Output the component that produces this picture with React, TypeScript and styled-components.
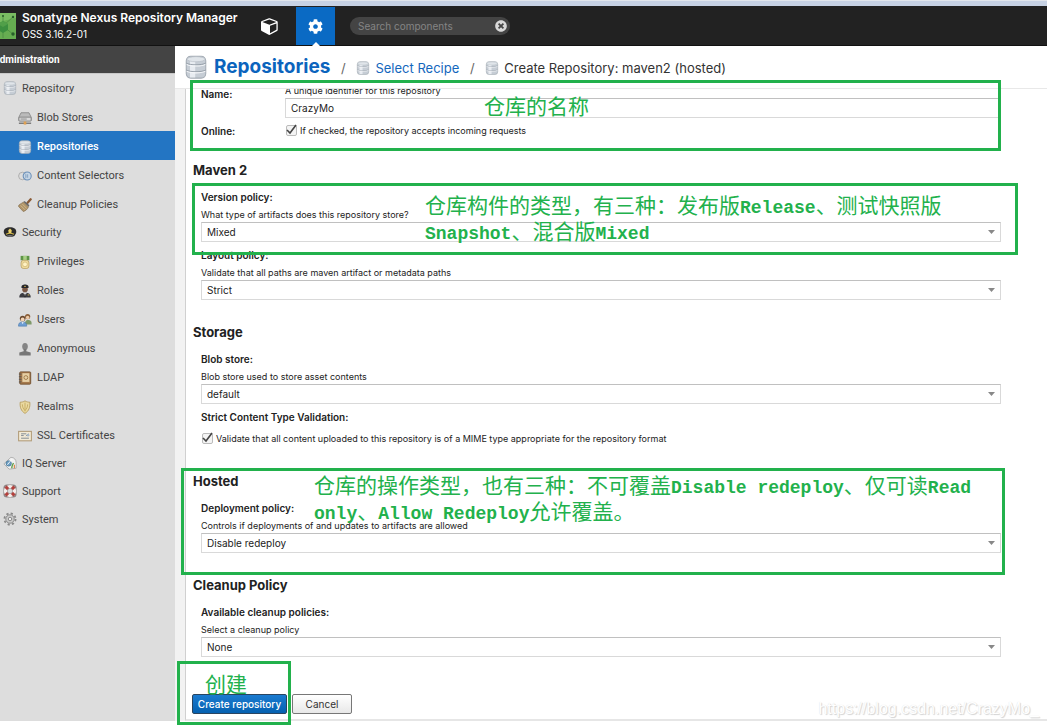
import React from "react";
import styled, { createGlobalStyle } from "styled-components";
import { FaCog, FaTimesCircle } from "react-icons/fa";

const GlobalStyle = createGlobalStyle`
  *, *::before, *::after { box-sizing: border-box; }
  body {
    margin: 0;
    background: #fff;
    color: #222;
    font-family: Inter, "Noto Sans CJK SC", sans-serif;
    font-size: 10px;
  }
  button, input, select { font: inherit; color: inherit; }
`;

const green = "#22b14c";

/* ---------- page frame ---------- */

const Page = styled.div`
  position: relative;
  display: flex;
  flex-direction: column;
  min-width: 900px;
  min-height: 100vh;
`;

const WindowEdge = styled.div`
  height: 6px;
  background: #c7d2e4;
  border-top: 1px solid #e2e6ec;
`;

const TopBar = styled.header`
  display: flex;
  align-items: stretch;
  height: 40px;
  background: #222;
  color: #fff;
  border-bottom: 1px solid #111;
`;

const Brand = styled.div`
  display: flex;
  align-items: center;
  gap: 6px;
  width: 251px;
  overflow: hidden;
  svg { flex: none; margin-left: -10px; }
`;

const BrandText = styled.div`
  display: flex;
  flex-direction: column;
  white-space: nowrap;
`;

const BrandName = styled.strong`
  font-size: 12px;
  line-height: 16px;
  font-weight: 600;
`;

const BrandVersion = styled.span`
  font-size: 10px;
  line-height: 16px;
`;

const ModeButton = styled.button<{ $active?: boolean }>`
  position: relative;
  display: flex;
  align-items: center;
  justify-content: center;
  width: ${(p) => (p.$active ? 39 : 38)}px;
  margin-right: ${(p) => (p.$active ? 0 : 7)}px;
  margin-top: 1px;
  height: 38px;
  padding: 0;
  border: 0;
  color: #fff;
  background: ${(p) => (p.$active ? "#0a6ac4" : "transparent")};
  &::after {
    content: "";
    display: ${(p) => (p.$active ? "block" : "none")};
    position: absolute;
    bottom: -1px;
    border: 4px solid transparent;
    border-top: 0;
    border-bottom-color: #fff;
  }
`;

const SearchBox = styled.label`
  align-self: center;
  display: flex;
  align-items: center;
  width: 160px;
  height: 18px;
  margin-left: 15px;
  padding: 0 3px 0 8px;
  border-radius: 9px;
  background: #444;
  color: #ddd;
  input {
    flex: 1;
    min-width: 0;
    padding: 0;
    border: 0;
    outline: 0;
    background: none;
    font-size: 10px;
  }
  input::placeholder { color: #858585; opacity: 1; }
`;

const ClearButton = styled.button`
  display: flex;
  padding: 0;
  border: 0;
  background: none;
  color: #d8d8d8;
`;

const Body = styled.div`
  display: flex;
  align-items: stretch;
`;

/* ---------- side menu ---------- */

const SideBar = styled.nav`
  flex: none;
  width: 175px;
  background: #ddd;
  overflow: hidden;
  font-family: Roboto, sans-serif;
`;

const SideTitle = styled.div`
  height: 28px;
  margin-left: -8px;
  padding-left: 1px;
  line-height: 28px;
  background: #444;
  border-bottom: 1px solid #c8c8c8;
  color: #fff;
  font-size: 10px;
  font-weight: 700;
`;

const SideItem = styled.a<{ $child?: boolean; $active?: boolean }>`
  display: flex;
  align-items: center;
  gap: 5px;
  height: ${(p) => (p.$child ? 29 : 28)}px;
  padding: ${(p) => (p.$child ? "2px 0 0 18px" : "0 0 0 3px")};
  text-decoration: none;
  font-size: 11px;
  font-weight: ${(p) => (p.$active ? 500 : 400)};
  color: ${(p) => (p.$active ? "#fff" : "#444")};
  background: ${(p) => (p.$active ? "#2375c3" : "transparent")};
`;

/* ---------- content ---------- */

const Main = styled.main`
  flex: 1;
  min-width: 0;
`;

const Crumbs = styled.div`
  display: flex;
  align-items: center;
  height: 42px;
  padding-left: 9px;
  white-space: nowrap;
  font-size: 13px;
  color: #333;
`;

const CrumbTitle = styled.h1`
  margin: 0 0 0 6px;
  font-size: 19px;
  line-height: 24px;
  font-weight: 700;
  color: #0b64bd;
`;

const Slash = styled.span`
  width: 26px;
  line-height: 18px;
  padding-top: 2px;
  text-align: center;
  color: #666;
`;

const CrumbPart = styled.span`
  display: flex;
  align-items: center;
  gap: 5px;
  line-height: 18px;
  padding-top: 2px;
  a { color: #1467bd; text-decoration: none; }
`;

const Scroller = styled.div`
  padding-left: 10px;
  background: #f2f2f2;
  border-top: 1px solid #e8e8e8;
`;

const Panel = styled.form`
  overflow: hidden;
  padding: 0 16px 5px 7px;
  background: #fff;
  border-left: 1px solid #d0d0d0;
  border-bottom: 2px solid #e6e6e6;
`;

const Section = styled.section<{ $first?: boolean }>`
  max-width: 808px;
  margin: ${(p) => (p.$first ? "-7px 0 -2px" : "22px 0 0")};
  padding-left: 8px;
`;

const SectionTitle = styled.h2`
  margin: 0 0 8px -8px;
  font-size: 13px;
  line-height: 20px;
  font-weight: 700;
`;

const Field = styled.div`
  display: flex;
  flex-direction: column;
  margin-bottom: 4px;
`;

const InlineField = styled.div`
  display: grid;
  grid-template-columns: 84px 1fr;
  margin-bottom: 4px;
`;

const Label = styled.label<{ $pushed?: boolean }>`
  padding-top: ${(p) => (p.$pushed ? 3 : 0)}px;
  font-size: 10px;
  line-height: 18px;
  font-weight: 600;
`;

const Hint = styled.span`
  padding-top: 2px;
  font-size: 9px;
  line-height: 14px;
`;

const TextInput = styled.input`
  width: 100%;
  height: 20px;
  padding: 0 5px;
  border: 1px solid #d9d9d9;
  border-top-color: #c0c0c0;
  background: #fff;
  font-size: 10px;
`;

const Picker = styled.div`
  display: grid;
  align-items: center;
  > * { grid-area: 1 / 1; }
  svg { justify-self: end; margin-right: 6px; pointer-events: none; }
`;

const Select = styled.select`
  appearance: none;
  width: 100%;
  height: 20px;
  padding: 0 5px;
  border: 1px solid #d9d9d9;
  border-top-color: #c0c0c0;
  border-radius: 0;
  background: #fff;
  font-size: 10px;
`;

const CheckRow = styled.label<{ $spaced?: boolean }>`
  display: flex;
  align-items: center;
  gap: 3px;
  height: 16px;
  margin: ${(p) => (p.$spaced ? "4px 0 3px" : "0")};
  font-size: 9px;
`;

const TickBox = styled.span`
  display: grid;
  width: 12px;
  height: 12px;
  > * { grid-area: 1 / 1; }
  svg { pointer-events: none; }
  input {
    appearance: none;
    width: 11px;
    height: 11px;
    margin: 1px 0 0 1px;
    border: 1px solid #bbb;
    border-radius: 2px;
    background: #f4f4f4;
  }
`;

const Actions = styled.div`
  display: flex;
  gap: 5px;
  padding-top: 33px;
  margin-left: -1px;
`;

const Button = styled.button<{ $primary?: boolean }>`
  width: ${(p) => (p.$primary ? 95 : 60)}px;
  height: 20px;
  padding: 0;
  border: 1px solid ${(p) => (p.$primary ? "#2a4560" : "#777")};
  border-radius: 2px;
  white-space: nowrap;
  font-size: 10px;
  font-weight: ${(p) => (p.$primary ? 500 : 400)};
  color: ${(p) => (p.$primary ? "#fff" : "#333")};
  background: ${(p) =>
    p.$primary ? "linear-gradient(#1b7bd0, #0561b0)" : "linear-gradient(#fff, #e8e8e8)"};
`;

/* ---------- notes drawn over the page ---------- */

const Frame = styled.div<{ $x: number; $y: number; $w: number; $h: number }>`
  position: absolute;
  left: ${(p) => p.$x}px;
  top: ${(p) => p.$y}px;
  width: ${(p) => p.$w}px;
  height: ${(p) => p.$h}px;
  border: 3px solid ${green};
  pointer-events: none;
`;

const Note = styled.p<{ $x: number; $y: number }>`
  position: absolute;
  left: ${(p) => p.$x}px;
  top: ${(p) => p.$y}px;
  margin: 0;
  color: ${green};
  font-family: "Noto Sans CJK SC", sans-serif;
  font-size: 21px;
  line-height: 26px;
  white-space: nowrap;
  pointer-events: none;
`;

const Latin = styled.span`
  font-family: "Liberation Mono", monospace;
  font-size: 18px;
  line-height: 1;
  font-weight: 700;
`;

const Watermark = styled.span`
  position: absolute;
  right: 8px;
  top: 699px;
  font-family: "Liberation Sans", sans-serif;
  font-size: 16px;
  line-height: 20px;
  color: #fff;
  text-shadow: 1px 1px 1px #d2d2d2, 0 0 1px #ddd;
`;

/* ---------- drawings ---------- */

type IconProps = { size?: number };

const Svg = ({ size = 14, children }: IconProps & { children: React.ReactNode }) => (
  <svg width={size} height={size} viewBox="0 0 16 16" fill="none" aria-hidden="true">
    {children}
  </svg>
);

const Logo = () => (
  <svg width="26" height="26" viewBox="0 0 26 26" aria-hidden="true">
    <rect width="26" height="26" fill="#66ad51" />
    <path d="M0 0h26v5L13 8 0 16z" fill="#7abd62" />
    <path d="M13 13 24 3M13 13l11 9M13 13V2M13 13v12" stroke="#4b8c41" strokeWidth=".8" />
    <path d="m13 8 5 3v6l-5 3-5-3v-6z" fill="#3c8f3f" />
    <path d="m13 8 5 3-5 3-5-3z" fill="#519f49" />
    <circle cx="23" cy="4" r="1.2" fill="#285f2a" />
    <circle cx="23" cy="21" r="1.7" fill="#285f2a" />
    <circle cx="13" cy="3" r="1" fill="#285f2a" />
  </svg>
);

const CubeIcon = () => (
  <svg width="18" height="18" viewBox="0 0 1792 1792" fill="currentColor" aria-hidden="true">
    <path d="M896 1629l640-349v-636l-640 233v752zm-64-865l698-254-698-254-698 254zm832-252v768q0 35-18 65t-49 47l-704 384q-28 16-61 16t-61-16l-704-384q-31-17-49-47t-18-65v-768q0-40 23-73t61-47l704-256q22-8 44-8t44 8l704 256q38 14 61 47t23 73z" />
  </svg>
);

const DatabaseIcon = ({ size }: IconProps) => (
  <Svg size={size}>
    <rect x="1.5" y=".8" width="13" height="14.6" rx="3" fill="#c6cdd5" stroke="#a3abb4" strokeWidth=".7" />
    <path d="M4 2h3.500v13H4z" fill="#f0f4f8" opacity=".8" />
    <ellipse cx="8" cy="2.8" rx="6" ry="1.700" fill="#e0e5ea" stroke="#b4bbc3" strokeWidth=".4" />
    <path d="M1.600 5.400c2 1.500 10.800 1.500 12.800 0M1.600 10c2 1.500 10.800 1.500 12.800 0" stroke="#929ba5" strokeWidth=".6" />
    <path d="M1.800 6.200c2 1.500 10.400 1.500 12.400 0M1.800 10.800c2 1.500 10.400 1.500 12.400 0" stroke="#f6f8fa" strokeWidth=".7" />
  </Svg>
);

const BlobIcon = () => (
  <Svg>
    <path d="M3.500 2h9L15 7v4H1V7z" fill="#bbb" stroke="#888" />
    <rect x="1" y="7" width="14" height="4.500" rx="1" fill="#d9d9d9" stroke="#808080" />
    <path d="M3 9.200h7" stroke="#888" />
    <path d="M1 14h14" stroke="#777" strokeWidth="1.600" />
    <rect x="6.500" y="12" width="3" height="3.500" fill="#e0a050" />
  </Svg>
);

const SelectorIcon = () => (
  <Svg>
    <circle cx="5" cy="8" r="4.300" fill="#ddd" stroke="#a8a8a8" />
    <circle cx="10.500" cy="8" r="4.600" fill="#bcd3ea" fillOpacity=".7" stroke="#6a8fb8" strokeWidth="1.200" />
    <path d="M9 6v4M11 6v4" stroke="#7f9fbf" />
  </Svg>
);

const BroomIcon = () => (
  <Svg>
    <path d="m11 5.500 3.500-4" stroke="#8a5a35" strokeWidth="2.600" strokeLinecap="round" />
    <path d="M6.500 4.500 12 10c-1 3-4 5-6 5.500L.5 9.500c0-2 3-3 6-5z" fill="#b09468" stroke="#7d6645" strokeWidth=".7" />
    <path d="m3 8.500 5 5M5 7l5 5" stroke="#e0cda5" strokeWidth=".7" />
    <path d="m7 4 5.500 5" stroke="#666" strokeWidth="1.600" />
  </Svg>
);

const CapIcon = () => (
  <Svg>
    <path d="M1 9c-1-5 3-6.500 7-6.500S16 4 15 9l-2 3.500c-3 1.300-7 1.300-10 0z" fill="#2c2c2c" />
    <path d="M3.500 10.500c3-1.300 6-1.300 9 0" stroke="#d4b94a" strokeWidth="1.200" />
    <path d="m8 4 2 2-.5 3h-3L6 6z" fill="#ecd269" />
    <path d="M4 12.300c3-1 5-1 8 0-2 1.200-6 1.200-8 0z" fill="#777" />
  </Svg>
);

const MedalIcon = () => (
  <Svg>
    <path d="M3 1h10v5H3z" fill="#5d9445" />
    <path d="M6 1h4v5H6z" fill="#a8cf86" />
    <rect x="3.500" y="6" width="9" height="9.500" rx="3" fill="#efdba0" stroke="#b49a59" strokeWidth=".8" />
    <circle cx="8" cy="10.700" r="2.700" fill="#fff2c4" stroke="#c9ae67" strokeWidth=".7" />
  </Svg>
);

const OfficerIcon = () => (
  <Svg>
    <path d="M1.500 15.500c0-4 2-5.500 6.500-5.500s6.500 1.500 6.500 5.500z" fill="#3b3b40" />
    <circle cx="8" cy="6.300" r="3.200" fill="#7a5743" />
    <path d="M4 4.500C3.500 1.500 5.500.5 8 .5s4.500 1 4 4z" fill="#26262a" />
    <path d="m6 10 2 4 2-4z" fill="#eee" />
    <path d="M8 11v4" stroke="#222" strokeWidth="1.200" />
    <path d="M7 2.700h2M11 12.500h2" stroke="#dcc05a" />
  </Svg>
);

const UsersIcon = () => (
  <Svg>
    <circle cx="11" cy="4" r="3" fill="#8b5f38" />
    <circle cx="11" cy="5" r="2" fill="#edcaa8" />
    <path d="M8 13c0-4 1-5 3.500-5S16 9 15.500 13z" fill="#7f9a6a" />
    <circle cx="5.300" cy="6.300" r="3.200" fill="#6b4a30" />
    <circle cx="5.300" cy="7.300" r="2.200" fill="#f3d4b6" />
    <path d="M.5 15c0-3.500 1.500-4.700 4.800-4.700s4.700 1.200 4.700 4.700z" fill="#6e9fd4" stroke="#4573a6" strokeWidth=".6" />
    <path d="m4 10.500 1.300 2 1.300-2z" fill="#fff" />
  </Svg>
);

const PersonIcon = () => (
  <Svg>
    <ellipse cx="8" cy="5" rx="3.200" ry="4" fill="#858585" />
    <path d="M6.500 8h3v2.500l5 1.500v3.500h-13V12l5-1.500z" fill="#777" />
  </Svg>
);

const BookIcon = () => (
  <Svg>
    <rect x="2" y="1" width="12.500" height="14" rx="1" fill="#a77a4c" stroke="#6f4d2b" />
    <rect x="5" y="2.500" width="8" height="10" fill="#e6cfa4" />
    <circle cx="9" cy="7.500" r="2.200" stroke="#9a7444" />
    <path d="M1 3.500h3M1 6.500h3M1 9.500h3M1 12.500h3" stroke="#555" />
  </Svg>
);

const ShieldIcon = () => (
  <Svg>
    <path d="M8 1c2 1.300 4 1.500 5.500 1.500.500 6-1 10-5.500 12.800C3.500 12.500 2 8.500 2.500 2.500 4 2.500 6 2.300 8 1z" fill="#ead9a0" stroke="#b69b5b" />
    <path d="M8 3v10M5 5c0 3 1 5 3 7 2-2 3-4 3-7" stroke="#c4a95f" />
  </Svg>
);

const CertificateIcon = () => (
  <Svg>
    <rect x=".7" y="2.700" width="14.600" height="10.800" fill="#f3ead6" stroke="#b19b78" strokeWidth="1.200" />
    <path d="M3.500 5.500h6M3.500 7.500h3M3.500 10.500h9M9 8l3-2.500" stroke="#77818c" />
    <circle cx="11.500" cy="7" r="1.500" fill="#a8b8c8" />
  </Svg>
);

const IqIcon = () => (
  <Svg>
    <path d="M1 9 9 1.500c4 0 6 3 6 6V14l-8 1z" fill="#f1f1f1" stroke="#999" strokeWidth=".8" />
    <circle cx="6.500" cy="8.500" r="3" fill="#6d9fc4" stroke="#4d7a9b" />
    <path d="m5 10 5-6" stroke="#fff" />
    <path d="M10 14c0-3 1-4 2-6" stroke="#61a04c" strokeWidth="1.600" />
    <path d="M13 14v-4" stroke="#d9894a" strokeWidth="1.400" />
  </Svg>
);

const LifebuoyIcon = () => (
  <Svg>
    <rect x=".5" y=".5" width="15" height="15" rx="4" fill="#8d8484" />
    <circle cx="8" cy="8" r="5" stroke="#f4eeec" strokeWidth="4" />
    <path d="m3 3 3 3M13 3l-3 3M3 13l3-3M13 13l-3-3" stroke="#b3403c" strokeWidth="3.600" />
    <circle cx="8" cy="8" r="2.900" fill="#ddd" stroke="#888" strokeWidth=".5" />
  </Svg>
);

const GearIcon = () => (
  <Svg>
    <circle cx="8" cy="8" r="6.400" stroke="#888" strokeWidth="2" strokeDasharray="2.500 2.526" />
    <circle cx="8" cy="8" r="4.800" fill="#ccc" stroke="#808080" strokeWidth="1" />
    <circle cx="8" cy="8" r="2" fill="#eee" stroke="#808080" />
  </Svg>
);

const Arrow = () => (
  <svg width="7" height="4" viewBox="0 0 7 4" aria-hidden="true">
    <path d="M0 0h7L3.500 4z" fill="#888" />
  </svg>
);

const Tick = () => (
  <svg width="12" height="12" viewBox="0 0 12 12" fill="none" aria-hidden="true">
    <path d="m2 6 3 3 6-8" stroke="#444" strokeWidth="1.600" />
  </svg>
);

/* ---------- parts ---------- */

type MenuEntry = { text: string; icon: React.ReactNode; child?: boolean; active?: boolean };

const menu: MenuEntry[] = [
  { text: "Repository", icon: <DatabaseIcon size={14} /> },
  { text: "Blob Stores", icon: <BlobIcon />, child: true },
  { text: "Repositories", icon: <DatabaseIcon size={14} />, child: true, active: true },
  { text: "Content Selectors", icon: <SelectorIcon />, child: true },
  { text: "Cleanup Policies", icon: <BroomIcon />, child: true },
  { text: "Security", icon: <CapIcon /> },
  { text: "Privileges", icon: <MedalIcon />, child: true },
  { text: "Roles", icon: <OfficerIcon />, child: true },
  { text: "Users", icon: <UsersIcon />, child: true },
  { text: "Anonymous", icon: <PersonIcon />, child: true },
  { text: "LDAP", icon: <BookIcon />, child: true },
  { text: "Realms", icon: <ShieldIcon />, child: true },
  { text: "SSL Certificates", icon: <CertificateIcon />, child: true },
  { text: "IQ Server", icon: <IqIcon /> },
  { text: "Support", icon: <LifebuoyIcon /> },
  { text: "System", icon: <GearIcon /> },
];

type SelectFieldProps = { id: string; label: string; hint: string; value: string };

const SelectField = ({ id, label, hint, value }: SelectFieldProps) => (
  <Field>
    <Label htmlFor={id}>{label}</Label>
    <Hint>{hint}</Hint>
    <Picker>
      <Select id={id} defaultValue={value}>
        <option>{value}</option>
      </Select>
      <Arrow />
    </Picker>
  </Field>
);

const Check = ({ id, text, spaced }: { id: string; text: string; spaced?: boolean }) => (
  <CheckRow $spaced={spaced}>
    <TickBox>
      <input id={id} type="checkbox" defaultChecked />
      <Tick />
    </TickBox>
    {text}
  </CheckRow>
);

export default function App() {
  return (
    <Page>
      <GlobalStyle />
      <WindowEdge />
      <TopBar>
        <Brand>
          <Logo />
          <BrandText>
            <BrandName>Sonatype Nexus Repository Manager</BrandName>
            <BrandVersion>OSS 3.16.2-01</BrandVersion>
          </BrandText>
        </Brand>
        <ModeButton type="button" aria-label="Browse">
          <CubeIcon />
        </ModeButton>
        <ModeButton type="button" aria-label="Administration" $active>
          <FaCog size={15} />
        </ModeButton>
        <SearchBox>
          <input type="text" placeholder="Search components" aria-label="Search components" />
          <ClearButton type="button" aria-label="Clear">
            <FaTimesCircle size={12} />
          </ClearButton>
        </SearchBox>
      </TopBar>
      <Body>
        <SideBar>
          <SideTitle>Administration</SideTitle>
          {menu.map((m) => (
            <SideItem key={m.text} href="#" $child={m.child} $active={m.active}>
              {m.icon}
              {m.text}
            </SideItem>
          ))}
        </SideBar>
        <Main>
          <Crumbs>
            <DatabaseIcon size={24} />
            <CrumbTitle>Repositories</CrumbTitle>
            <Slash>/</Slash>
            <CrumbPart>
              <DatabaseIcon size={14} />
              <a href="#">Select Recipe</a>
            </CrumbPart>
            <Slash>/</Slash>
            <CrumbPart>
              <DatabaseIcon size={14} />
              Create Repository: maven2 (hosted)
            </CrumbPart>
          </Crumbs>
          <Scroller>
            <Panel onSubmit={(e) => e.preventDefault()}>
              <Section $first>
                <InlineField>
                  <Label htmlFor="name" $pushed>Name:</Label>
                  <Field>
                    <Hint>A unique identifier for this repository</Hint>
                    <TextInput id="name" type="text" defaultValue="CrazyMo" />
                  </Field>
                  <Label htmlFor="online">Online:</Label>
                  <Check id="online" text="If checked, the repository accepts incoming requests" />
                </InlineField>
              </Section>
              <Section>
                <SectionTitle>Maven 2</SectionTitle>
                <SelectField id="version" label="Version policy:" hint="What type of artifacts does this repository store?" value="Mixed" />
                <SelectField id="layout" label="Layout policy:" hint="Validate that all paths are maven artifact or metadata paths" value="Strict" />
              </Section>
              <Section>
                <SectionTitle>Storage</SectionTitle>
                <SelectField id="blob" label="Blob store:" hint="Blob store used to store asset contents" value="default" />
                <Field>
                  <Label htmlFor="strict">Strict Content Type Validation:</Label>
                  <Check
                    id="strict"
                    spaced
                    text="Validate that all content uploaded to this repository is of a MIME type appropriate for the repository format"
                  />
                </Field>
              </Section>
              <Section>
                <SectionTitle>Hosted</SectionTitle>
                <SelectField id="deployment" label="Deployment policy:" hint="Controls if deployments of and updates to artifacts are allowed" value="Disable redeploy" />
              </Section>
              <Section>
                <SectionTitle>Cleanup Policy</SectionTitle>
                <SelectField id="cleanup" label="Available cleanup policies:" hint="Select a cleanup policy" value="None" />
              </Section>
              <Actions>
                <Button type="submit" $primary>Create repository</Button>
                <Button type="button">Cancel</Button>
              </Actions>
            </Panel>
          </Scroller>
        </Main>
      </Body>

      <Frame $x={190} $y={80} $w={811} $h={71} />
      <Note $x={484} $y={92}>仓库的名称</Note>
      <Frame $x={192} $y={183} $w={826} $h={72} />
      <Note $x={425} $y={191}>
        仓库构件的类型，有三种：发布版<Latin>Release</Latin>、测试快照版
        <br />
        <Latin>Snapshot</Latin>、混合版<Latin>Mixed</Latin>
      </Note>
      <Frame $x={181} $y={468} $w={824} $h={107} />
      <Note $x={314} $y={471}>
        仓库的操作类型，也有三种：不可覆盖<Latin>Disable redeploy</Latin>、仅可读<Latin>Read</Latin>
        <br />
        <Latin>only</Latin>、<Latin>Allow Redeploy</Latin>允许覆盖。
      </Note>
      <Frame $x={177} $y={661} $w={114} $h={64} />
      <Note $x={205} $y={670}>创建</Note>
      <Watermark>https://blog.csdn.net/CrazyMo_</Watermark>
    </Page>
  );
}
